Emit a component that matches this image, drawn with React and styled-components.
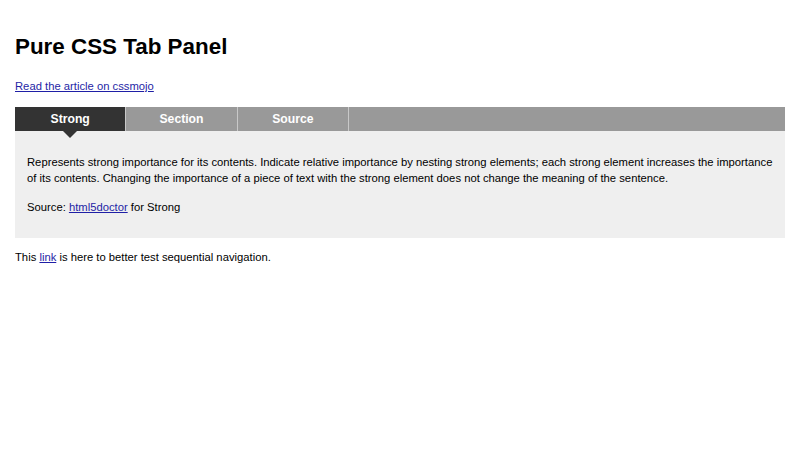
import React, { useState } from 'react';
import styled, { createGlobalStyle } from 'styled-components';

const GlobalStyle = createGlobalStyle`
  body {
    margin: 0;
    padding: 0 15px;
    background: #fff;
    color: #000;
    font-family: "Liberation Sans", Arial, sans-serif;
    font-size: 11.25px;
  }
`;

const tabs = [
  {
    label: 'Strong',
    text: 'Represents strong importance for its contents. Indicate relative importance by nesting strong elements; each strong element increases the importance of its contents. Changing the importance of a piece of text with the strong element does not change the meaning of the sentence.',
    source: 'Strong',
  },
  {
    label: 'Section',
    text: 'Represents a generic document or application section. In this context, a section is a thematic grouping of content, typically with a header, possibly with a footer.',
    source: 'Section',
  },
  {
    label: 'Source',
    text: 'The source element allows authors to specify multiple media resources for media elements.',
    source: 'Source',
  },
];

function App() {
  const [active, setActive] = useState(0);
  const tab = tabs[active];

  return (
    <>
      <GlobalStyle />
      <Title>Pure CSS Tab Panel</Title>
      <Intro>
        <Link href="#">Read the article on cssmojo</Link>
      </Intro>
      <TabBar>
        {tabs.map((t, i) => (
          <Tab key={t.label} $active={i === active} onClick={() => setActive(i)}>
            {t.label}
          </Tab>
        ))}
      </TabBar>
      <Panel>
        <Para>{tab.text}</Para>
        <Para>
          Source: <Link href="#">html5doctor</Link> for {tab.source}
        </Para>
      </Panel>
      <Footer>
        This <Link href="#">link</Link> is here to better test sequential navigation.
      </Footer>
    </>
  );
}

export default App;

const Title = styled.h1`
  font-size: 22.4px;
  font-weight: bold;
  margin: 0;
  padding-top: 33px;
  line-height: 28px;
`;

const Intro = styled.p`
  margin: 18px 0 13px;
  line-height: 15px;
`;

const Link = styled.a`
  color: #1f1fa6;
  text-decoration: underline;
`;

const TabBar = styled.div`
  display: flex;
  height: 24px;
  background: #999;
`;

const Tab = styled.button`
  position: relative;
  width: 111.33px;
  height: 24px;
  padding: 0;
  border: none;
  border-right: 1px solid #c8c8c8;
  background: ${({ $active }) => ($active ? '#333' : '#999')};
  color: #fff;
  font-family: "Liberation Sans", Arial, sans-serif;
  font-size: 12.2px;
  font-weight: bold;
  cursor: pointer;
  &::after {
    content: '';
    display: ${({ $active }) => ($active ? 'block' : 'none')};
    position: absolute;
    left: 50%;
    top: 100%;
    margin-left: -7px;
    border-left: 7px solid transparent;
    border-right: 7px solid transparent;
    border-top: 7px solid #333;
  }
`;

const Panel = styled.div`
  background: #efefef;
  padding: 10px 12px;
`;

const Para = styled.p`
  margin: 13px 0;
  line-height: 16px;
`;

const Footer = styled.p`
  margin: 12px 0;
  line-height: 15px;
`;
